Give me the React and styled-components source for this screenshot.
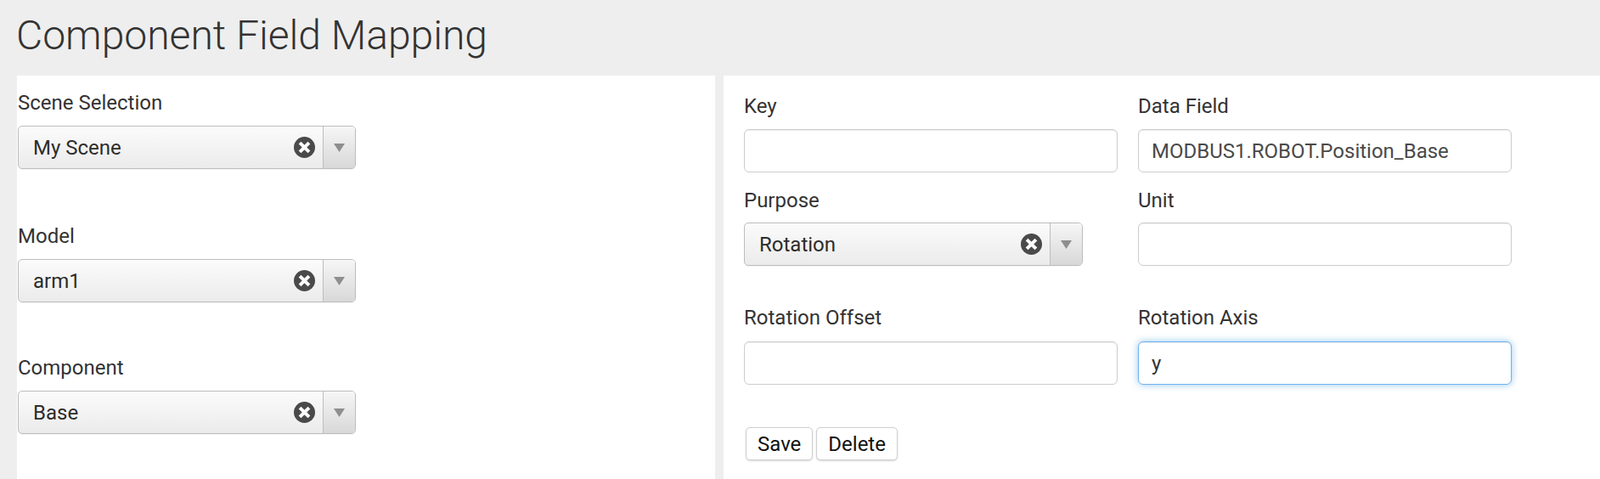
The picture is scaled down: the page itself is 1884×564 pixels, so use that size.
import React from "react";
import styled, { createGlobalStyle } from "styled-components";

const GlobalStyle = createGlobalStyle`
  html, body {
    margin: 0;
    padding: 0;
    background: #eeeeee;
    font-family: Roboto, "Liberation Sans", Arial, sans-serif;
    color: #333;
  }
  * {
    box-sizing: border-box;
  }
`;

const Page = styled.div`
  width: 1884px;
  height: 564px;
  display: flex;
  flex-direction: column;
  background: #eeeeee;
  overflow: hidden;
`;

const Header = styled.header`
  height: 89px;
  padding: 13px 0 0 19px;
  h1 {
    margin: 0;
    font-size: 48px;
    line-height: 58px;
    font-weight: 300;
    color: #333;
  }
`;

const Main = styled.div`
  flex: 1;
  display: flex;
  gap: 10px;
  padding-left: 20px;
`;

const Panel = styled.section`
  background: #fff;
  width: ${(p) => (p.$width ? `${p.$width}px` : "auto")};
  flex: ${(p) => (p.$width ? "none" : 1)};
  padding: ${(p) => p.$pad};
`;

const Group = styled.div`
  margin-bottom: ${(p) => p.$space || 0}px;
`;

const Label = styled.label`
  display: block;
  font-size: 24px;
  line-height: 29px;
  color: #333;
  margin-bottom: ${(p) => p.$gap || 12}px;
`;

const SelectBox = styled.div`
  width: ${(p) => p.$width}px;
  height: 51px;
  display: flex;
  align-items: stretch;
  border: 1px solid #bdbdbd;
  border-radius: 5px;
  background: linear-gradient(#fbfbfb, #ebebeb);
  box-shadow: 0 1px 0 rgba(0, 0, 0, 0.04);
  overflow: hidden;
`;

const SelectValue = styled.div`
  flex: 1;
  display: flex;
  align-items: center;
  padding-left: 17px;
  font-size: 24px;
  color: #2d2d2d;
`;

const Clear = styled.div`
  display: flex;
  align-items: center;
  margin-right: 9px;
`;

const Arrow = styled.div`
  width: 38px;
  border-left: 1px solid #bdbdbd;
  background: linear-gradient(#f6f6f6, #d8d8d8);
  display: flex;
  align-items: center;
  justify-content: center;
`;

const Row = styled.div`
  display: grid;
  grid-template-columns: 440px 440px;
  column-gap: 24px;
  margin-bottom: ${(p) => p.$space}px;
`;

const TextInput = styled.input`
  display: block;
  width: 440px;
  height: 51px;
  padding: 0 15px;
  font-family: Roboto, "Liberation Sans", Arial, sans-serif;
  font-size: 24px;
  color: ${(p) => (p.$focused ? "#333" : "#4a4a4a")};
  background: #fff;
  border: 1px solid ${(p) => (p.$focused ? "#6fb3ee" : "#cccccc")};
  border-radius: 6px;
  outline: none;
  box-shadow: ${(p) =>
    p.$focused
      ? "inset 0 1px 1px rgba(0,0,0,.075), 0 0 9px rgba(102,175,233,.7)"
      : "inset 0 1px 1px rgba(0,0,0,.075)"};
`;

const Actions = styled.div`
  display: flex;
  gap: 4px;
  padding-left: 2px;
`;

const Button = styled.button`
  height: 39px;
  padding: 0 13px;
  font-family: Roboto, "Liberation Sans", Arial, sans-serif;
  font-size: 24px;
  color: #111;
  background: #fff;
  border: 1px solid #cfcfcf;
  border-radius: 5px;
  box-shadow: 0 1px 2px rgba(0, 0, 0, 0.15);
  cursor: pointer;
`;

const ClearIcon = () => (
  <svg width="25" height="25" viewBox="0 0 24 24">
    <circle cx="12" cy="12" r="12" fill="#4a4a4a" />
    <path d="M6.8 6.8 L17.2 17.2 M17.2 6.8 L6.8 17.2" stroke="#fff" strokeWidth="3.8" />
  </svg>
);

const Caret = () => (
  <svg width="13" height="10" viewBox="0 0 13 10">
    <path d="M0 0 H13 L6.5 10 Z" fill="#8e8e8e" />
  </svg>
);

const Select = ({ value, width = 398 }) => (
  <SelectBox $width={width}>
    <SelectValue>{value}</SelectValue>
    <Clear>
      <ClearIcon />
    </Clear>
    <Arrow>
      <Caret />
    </Arrow>
  </SelectBox>
);

export default function App() {
  return (
    <Page>
      <GlobalStyle />
      <Header>
        <h1>Component Field Mapping</h1>
      </Header>
      <Main>
        <Panel $width={822} $pad="18px 0 0 1px">
          <Group $space={65}>
            <Label>Scene Selection</Label>
            <Select value="My Scene" />
          </Group>
          <Group $space={63}>
            <Label>Model</Label>
            <Select value="arm1" />
          </Group>
          <Group>
            <Label>Component</Label>
            <Select value="Base" />
          </Group>
        </Panel>
        <Panel $pad="22px 0 0 24px">
          <Row $space={19}>
            <div>
              <Label>Key</Label>
              <TextInput defaultValue="" />
            </div>
            <div>
              <Label>Data Field</Label>
              <TextInput defaultValue="MODBUS1.ROBOT.Position_Base" />
            </div>
          </Row>
          <Row $space={47}>
            <div>
              <Label $gap={11}>Purpose</Label>
              <Select value="Rotation" width={399} />
            </div>
            <div>
              <Label $gap={11}>Unit</Label>
              <TextInput defaultValue="" />
            </div>
          </Row>
          <Row $space={50}>
            <div>
              <Label $gap={13}>Rotation Offset</Label>
              <TextInput defaultValue="" />
            </div>
            <div>
              <Label $gap={13}>Rotation Axis</Label>
              <TextInput defaultValue="y" $focused />
            </div>
          </Row>
          <Actions>
            <Button>Save</Button>
            <Button>Delete</Button>
          </Actions>
        </Panel>
      </Main>
    </Page>
  );
}
